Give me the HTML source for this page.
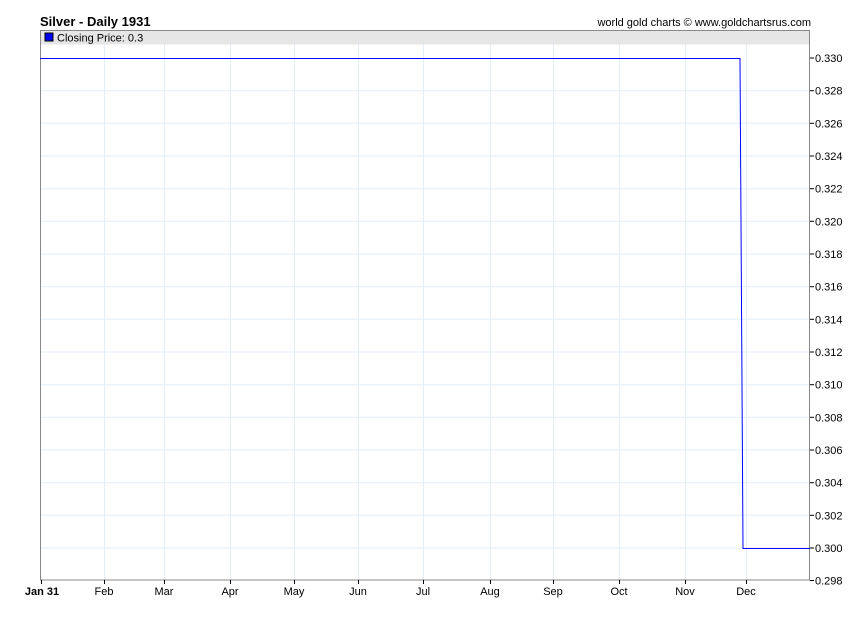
<!DOCTYPE html>
<html><head><style>
body{margin:0;background:#fff;width:850px;height:616px;overflow:hidden;font-family:"Liberation Sans",Arial,sans-serif}
</style></head><body>
<svg width="850" height="616" xmlns="http://www.w3.org/2000/svg" font-family="Liberation Sans, Arial, sans-serif">
<text x="40" y="26" font-size="13" font-weight="bold" fill="#000">Silver - Daily 1931</text>
<text x="811" y="26" font-size="11" fill="#000" text-anchor="end">world gold charts © www.goldchartsrus.com</text>
<g stroke="#e3eef8" stroke-width="1">
<line x1="104.5" y1="44" x2="104.5" y2="580"/><line x1="164.5" y1="44" x2="164.5" y2="580"/>
<line x1="230.5" y1="44" x2="230.5" y2="580"/><line x1="294.5" y1="44" x2="294.5" y2="580"/>
<line x1="358.5" y1="44" x2="358.5" y2="580"/><line x1="423.5" y1="44" x2="423.5" y2="580"/>
<line x1="490.5" y1="44" x2="490.5" y2="580"/><line x1="553.5" y1="44" x2="553.5" y2="580"/>
<line x1="619.5" y1="44" x2="619.5" y2="580"/><line x1="685.5" y1="44" x2="685.5" y2="580"/>
<line x1="746.5" y1="44" x2="746.5" y2="580"/>
<line x1="40" y1="90.7" x2="810" y2="90.7"/><line x1="40" y1="123.3" x2="810" y2="123.3"/>
<line x1="40" y1="156" x2="810" y2="156"/><line x1="40" y1="188.7" x2="810" y2="188.7"/>
<line x1="40" y1="221.3" x2="810" y2="221.3"/><line x1="40" y1="254" x2="810" y2="254"/>
<line x1="40" y1="286.7" x2="810" y2="286.7"/><line x1="40" y1="319.3" x2="810" y2="319.3"/>
<line x1="40" y1="352" x2="810" y2="352"/><line x1="40" y1="384.7" x2="810" y2="384.7"/>
<line x1="40" y1="417.3" x2="810" y2="417.3"/><line x1="40" y1="450" x2="810" y2="450"/>
<line x1="40" y1="482.7" x2="810" y2="482.7"/><line x1="40" y1="515.3" x2="810" y2="515.3"/>
<line x1="40" y1="548" x2="810" y2="548"/>
</g>
<rect x="40.5" y="30.5" width="769" height="14" fill="#e6e6e6"/>
<rect x="45" y="33" width="8" height="8" fill="#0000ee" stroke="#000" stroke-width="1"/>
<text x="57" y="41.5" font-size="11" fill="#000">Closing Price: 0.3</text>
<rect x="40.5" y="30.5" width="769" height="549.5" fill="none" stroke="#888" stroke-width="1"/>
<polyline points="40,58.5 740,58.5 743,548.5 810,548.5" fill="none" stroke="#0000ff" stroke-width="1"/>
<g stroke="#000" stroke-width="1">
<line x1="41.5" y1="580" x2="41.5" y2="584"/><line x1="104.5" y1="580" x2="104.5" y2="584"/>
<line x1="164.5" y1="580" x2="164.5" y2="584"/><line x1="230.5" y1="580" x2="230.5" y2="584"/>
<line x1="294.5" y1="580" x2="294.5" y2="584"/><line x1="358.5" y1="580" x2="358.5" y2="584"/>
<line x1="423.5" y1="580" x2="423.5" y2="584"/><line x1="490.5" y1="580" x2="490.5" y2="584"/>
<line x1="553.5" y1="580" x2="553.5" y2="584"/><line x1="619.5" y1="580" x2="619.5" y2="584"/>
<line x1="685.5" y1="580" x2="685.5" y2="584"/><line x1="746.5" y1="580" x2="746.5" y2="584"/>
</g>
<g font-size="11" fill="#000" text-anchor="middle">
<text x="42" y="595" font-weight="bold">Jan 31</text><text x="104" y="595">Feb</text>
<text x="164" y="595">Mar</text><text x="230" y="595">Apr</text><text x="294" y="595">May</text>
<text x="358" y="595">Jun</text><text x="423" y="595">Jul</text><text x="490" y="595">Aug</text>
<text x="553" y="595">Sep</text><text x="619" y="595">Oct</text><text x="685" y="595">Nov</text>
<text x="746" y="595">Dec</text>
</g>
<g stroke="#000" stroke-width="1">
<line x1="810" y1="58" x2="814" y2="58"/><line x1="810" y1="90.7" x2="814" y2="90.7"/>
<line x1="810" y1="123.3" x2="814" y2="123.3"/><line x1="810" y1="156" x2="814" y2="156"/>
<line x1="810" y1="188.7" x2="814" y2="188.7"/><line x1="810" y1="221.3" x2="814" y2="221.3"/>
<line x1="810" y1="254" x2="814" y2="254"/><line x1="810" y1="286.7" x2="814" y2="286.7"/>
<line x1="810" y1="319.3" x2="814" y2="319.3"/><line x1="810" y1="352" x2="814" y2="352"/>
<line x1="810" y1="384.7" x2="814" y2="384.7"/><line x1="810" y1="417.3" x2="814" y2="417.3"/>
<line x1="810" y1="450" x2="814" y2="450"/><line x1="810" y1="482.7" x2="814" y2="482.7"/>
<line x1="810" y1="515.3" x2="814" y2="515.3"/><line x1="810" y1="548" x2="814" y2="548"/>
<line x1="810" y1="580.5" x2="814" y2="580.5"/>
</g>
<g font-size="11" fill="#000">
<text x="815" y="62">0.330</text><text x="815" y="94.7">0.328</text><text x="815" y="127.3">0.326</text>
<text x="815" y="160">0.324</text><text x="815" y="192.7">0.322</text><text x="815" y="225.3">0.320</text>
<text x="815" y="258">0.318</text><text x="815" y="290.7">0.316</text><text x="815" y="323.3">0.314</text>
<text x="815" y="356">0.312</text><text x="815" y="388.7">0.310</text><text x="815" y="421.3">0.308</text>
<text x="815" y="454">0.306</text><text x="815" y="486.7">0.304</text><text x="815" y="519.3">0.302</text>
<text x="815" y="552">0.300</text><text x="815" y="584.5">0.298</text>
</g>
</svg>
</body></html>
